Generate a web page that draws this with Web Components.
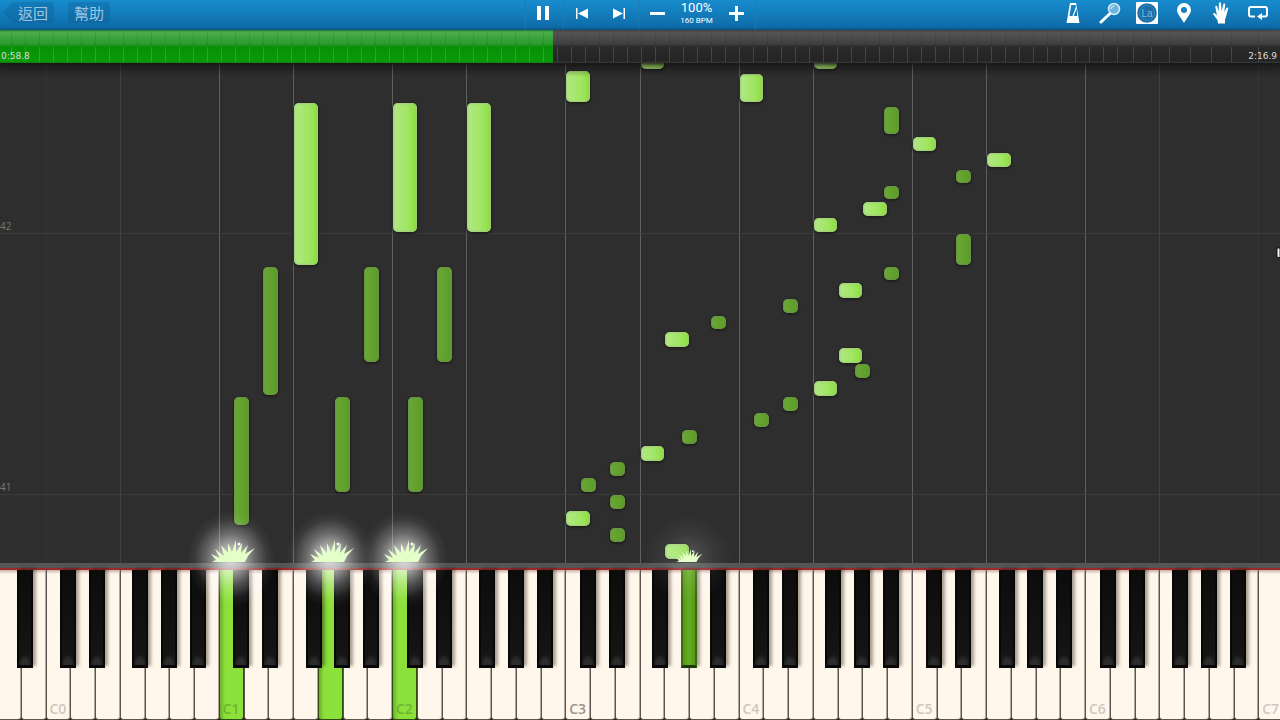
<!DOCTYPE html>
<html lang="zh-Hant">
<head>
<meta charset="utf-8">
<meta name="viewport" content="width=device-width, initial-scale=1">
<title>Piano Roll</title>
<style>
    body {
        margin: 0;
        background: #2e2e2e;
        font-family: "Open Sans", "Noto Sans CJK TC", sans-serif;
    }
</style>
</head>
<body>
<piano-app></piano-app>

<script>
const WHITE_COUNT = 52;
const WHITE_STEPS = { C: 0, D: 1, E: 2, F: 3, G: 4, A: 5, B: 6 };
const BLACK_STEPS = { 'C#': 1, 'D#': 3, 'F#': 6, 'G#': 8, 'A#': 10 };

// The board starts at A-1, so C0 is the third white key
function parseNote(note) {
    const [, name, octave] = note.match(/^([A-G]#?)(-?\d)$/);
    const black = name.length === 2;
    const octaveStart = 2 + Number(octave) * 7;
    const column = black
        ? octaveStart + (BLACK_STEPS[name] + 0.5) * 7 / 12
        : octaveStart + WHITE_STEPS[name];
    return { black, left: column / WHITE_COUNT * 100 };
}

class ToolButton extends HTMLElement {
    constructor() {
        super();
        this.attachShadow({ mode: 'open' });
        this.shadowRoot.innerHTML = `
            <style>
                :host { display: block; width: 37px; height: 30px; }
                button {
                    display: flex;
                    align-items: center;
                    justify-content: center;
                    width: 100%;
                    height: 26px;
                    padding: 0;
                    border: 0;
                    background: none;
                    color: #fff;
                    cursor: pointer;
                }
            </style>
            <button type="button" aria-label="${this.getAttribute('label')}"><slot></slot></button>
        `;
    }
}
customElements.define('tool-button', ToolButton);

class PianoToolbar extends HTMLElement {
    constructor() {
        super();
        this.attachShadow({ mode: 'open' });
        this.shadowRoot.innerHTML = `
            <style>
                :host {
                    display: grid;
                    grid-template-columns: 1fr auto 1fr;
                    height: 30px;
                    background: linear-gradient(#178ccd, #0e69a6);
                    color: #fff;
                }
                svg { display: block; fill: currentColor; }
                .menu { display: flex; gap: 14px; padding: 2px 0 0 3px; }
                .menu button {
                    height: 21px;
                    padding: 0 6px;
                    border: 0;
                    border-radius: 3px;
                    background: rgba(10, 80, 130, .25);
                    color: #9cc6e0;
                    font: 15px/19px "Noto Sans CJK TC", sans-serif;
                }
                .menu .back {
                    padding-left: 15px;
                    clip-path: polygon(0 50%, 10px 0, 100% 0, 100% 100%, 10px 100%);
                }
                .transport { display: flex; }
                .group {
                    display: flex;
                    box-sizing: border-box;
                    border-left: 1px solid #1c7ab4;
                }
                .group:last-child { border-right: 1px solid #1c7ab4; }
                .tempo {
                    display: flex;
                    flex-direction: column;
                    width: 42px;
                    text-align: center;
                    font-family: Roboto, sans-serif;
                }
                .tempo .speed { font-size: 13px; line-height: 16px; }
                .tempo .bpm { font-size: 8px; line-height: 10px; }
                .tools { display: flex; justify-content: flex-end; padding-right: 4px; }
            </style>
            <nav class="menu">
                <button class="back" type="button">返回</button>
                <button type="button">幫助</button>
            </nav>
            <div class="transport">
                <div class="group">
                    <tool-button label="Pause">
                        <svg width="14" height="14"><path d="M0 0h4v14H0zM8 0h4v14H8z"/></svg>
                    </tool-button>
                </div>
                <div class="group">
                    <tool-button label="Previous">
                        <svg width="13" height="11"><path d="M0 0h1.500v11H0zM12 .5v10L2 5.500z"/></svg>
                    </tool-button>
                    <tool-button label="Next">
                        <svg width="13" height="11"><path d="M10.500 0H12v11h-1.500zM0 .5v10l10-5z"/></svg>
                    </tool-button>
                </div>
                <div class="group">
                    <tool-button label="Slower">
                        <svg width="15" height="15"><path d="M0 6h15v3H0z"/></svg>
                    </tool-button>
                    <div class="tempo">
                        <span class="speed">100%</span>
                        <span class="bpm">160 BPM</span>
                    </div>
                    <tool-button label="Faster">
                        <svg width="15" height="15"><path d="M0 6h6V0h3v6h6v3H9v6H6V9H0z"/></svg>
                    </tool-button>
                </div>
            </div>
            <div class="tools">
                <tool-button label="Metronome">
                    <svg width="16" height="22" viewBox="0 0 16 22">
                        <path fill-rule="evenodd" d="M5 1h6l3.500 20h-13zM6.200 3L4.500 14h3L11 4.500 10.500 3zM11.500 6.500L8.800 14h3.500z"/>
                    </svg>
                </tool-button>
                <tool-button label="Zoom">
                    <svg width="22" height="22" viewBox="0 0 22 22">
                        <circle cx="15" cy="7" r="5.500" fill="#6ab4e0" stroke="#d5eaf7" stroke-width="1.500"/>
                        <path d="M2 20L10.500 12" stroke="#fff" stroke-width="3" stroke-linecap="round"/>
                        <path d="M12 7a3.500 3.500 0 0 1 3.500-3" fill="none" stroke="#b9dcf1" stroke-width="1.500"/>
                    </svg>
                </tool-button>
                <tool-button label="Note names">
                    <svg width="22" height="22" viewBox="0 0 22 22">
                        <rect width="22" height="22" rx="1"/>
                        <circle cx="11" cy="11" r="9.800" fill="#1a6da6"/>
                        <circle cx="11" cy="11" r="7.500" fill="none" stroke="#2f85bd"/>
                        <text x="11" y="15" text-anchor="middle" font-size="10" fill="#7fb9dd">La</text>
                    </svg>
                </tool-button>
                <tool-button label="Marker">
                    <svg width="14" height="20" viewBox="0 0 14 20">
                        <path fill-rule="evenodd" d="M7 0a7 7 0 0 1 7 7c0 4-4.500 8-7 13C4.500 15 0 11 0 7a7 7 0 0 1 7-7zm0 4a3 3 0 1 0 0 6 3 3 0 0 0 0-6z"/>
                    </svg>
                </tool-button>
                <tool-button label="Hands">
                    <svg width="16" height="22" viewBox="0 0 16 22">
                        <path d="M5 21.500L4.500 18 .3 12.500C-.2 11.300 1.200 10.600 2 11.400l2 2L2.300 5c-.2-1.500 1.600-1.700 1.900-.4L5.800 9.500 5.900 1.500c0-1.600 2-1.600 2.100 0L8.600 9.300 10.200 2.500c.3-1.500 2.200-1.100 2 .4L11.300 10l2-3.800c.6-1.200 2.200-.6 1.800.7L13.200 14l-1.200 4v3.500z"/>
                    </svg>
                </tool-button>
                <tool-button label="Loop">
                    <svg width="20" height="14" viewBox="0 0 20 14">
                        <path d="M7 10.500H3a2 2 0 0 1-2-2V3a2 2 0 0 1 2-2h14a2 2 0 0 1 2 2v5.500a2 2 0 0 1-2 2h-4" fill="none" stroke="currentColor" stroke-width="2"/>
                        <path d="M9 10.500l5-3.500v7z"/>
                    </svg>
                </tool-button>
            </div>
        `;
    }
}
customElements.define('piano-toolbar', PianoToolbar);

class SeekBar extends HTMLElement {
    constructor() {
        super();
        this.attachShadow({ mode: 'open' });
        this.shadowRoot.innerHTML = `
            <style>
                :host {
                    display: grid;
                    height: 33px;
                    box-shadow: 0 1px 4px #181818;
                    position: relative;
                    z-index: 1;
                }
                :host > * { grid-area: 1 / 1; }
                progress {
                    appearance: none;
                    width: 100%;
                    height: 33px;
                    border: 0;
                }
                progress::-webkit-progress-bar {
                    background: linear-gradient(#3d3d3d, #555 2px, #404040 14px, #2a2a2a 17px, #242424 31px, #3a3a3a);
                }
                progress::-webkit-progress-value {
                    background: linear-gradient(#1a7a3a, #4bac4b 2px, #2a9a2a 14px, #079007 17px, #0a9a0a 31px, #137a13);
                }
                svg { width: 100%; height: 33px; }
                .times {
                    display: flex;
                    justify-content: space-between;
                    align-items: flex-end;
                    padding: 0 3px 1px 1px;
                    color: #dcdcdc;
                    font: 9px/12px "DejaVu Sans", sans-serif;
                }
            </style>
            <progress max="1000" value="432" aria-label="Song position"></progress>
            <svg>${this.renderTicks()}</svg>
            <div class="times"><span>0:58.8</span><span>2:16.9</span></div>
        `;
    }

    renderTicks() {
        // Measures get longer where the song slows down at the end
        const ticks = [];
        for (let x = 11; x < 1120; x += 14) ticks.push(x);
        ticks.push(1133, 1151, 1169, 1190, 1211, 1231, 1258);
        return ticks.map(x => `
            <rect x="${x / 12.8}%" y="1" width="1" height="16" fill="#000" opacity=".08" />
            <rect x="${x / 12.8}%" y="17" width="1" height="15" fill="#fff" opacity=".14" />
        `).join('');
    }
}
customElements.define('seek-bar', SeekBar);

class NoteRoll extends HTMLElement {
    constructor() {
        super();
        this.attachShadow({ mode: 'open' });
        this._notes = [];
        this.render();
    }

    set notes(value) {
        this._notes = value;
        this.render();
    }

    render() {
        this.shadowRoot.innerHTML = `
            <style>
                :host {
                    display: block;
                    position: relative;
                    overflow: hidden;
                    min-height: 300px;
                    background: #2e2e2e;
                }
                :host::after {
                    content: "";
                    position: absolute;
                    inset: 0 0 auto;
                    height: 14px;
                    background: linear-gradient(rgba(0, 0, 0, .4), transparent);
                }
                .board { position: absolute; inset: 0 -3px 0 -4px; }
                .column {
                    position: absolute;
                    top: 0;
                    bottom: 0;
                    width: 1px;
                    background: #606060;
                }
                .measure {
                    position: absolute;
                    left: 0;
                    right: 0;
                    height: 1px;
                    background: #3c3c3c;
                }
                .measure span {
                    position: absolute;
                    left: 4px;
                    bottom: 1px;
                    color: #777;
                    font-size: 10px;
                    line-height: 14px;
                }
                .note {
                    position: absolute;
                    box-sizing: border-box;
                    width: calc(100% / ${WHITE_COUNT} - 1px);
                    margin-left: 1px;
                    border-radius: 5px;
                    background: linear-gradient(90deg, #b2e886, #a0e663 60%, #8cdc3c);
                    box-shadow: inset 0 0 2px 1px #a3c97e, 0 1px 2px 1px #202020;
                }
                .note.black {
                    width: 15px;
                    margin-left: -6px;
                    background: linear-gradient(90deg, #6ba838, #5c9c26);
                    box-shadow: inset 0 0 2px 1px #6b9248, 0 1px 2px 1px #202020;
                }
            </style>
            <div class="board">
                ${this.renderColumns()}
                ${this.renderMeasure(42, 329)}
                ${this.renderMeasure(41, 68)}
                ${this._notes.map(note => this.renderNote(note)).join('')}
            </div>
        `;
    }

    renderColumns() {
        let columns = '';
        for (let octave = 0; octave < 8; octave++) {
            ['C', 'F'].forEach(name => {
                const { left } = parseNote(name + octave);
                if (left > 99) return;
                // Lines fade out towards both ends of the board
                const edge = Math.min(left, 100 - left);
                const opacity = edge < 5 ? 0.15 : edge < 12 ? 0.4 : 1;
                columns += `<div class="column" style="left:${left}%;opacity:${opacity}"></div>`;
            });
        }
        return columns;
    }

    renderMeasure(number, bottom) {
        return `<div class="measure" style="bottom:${bottom}px"><span>${number}</span></div>`;
    }

    renderNote([note, bottom, height]) {
        const { black, left } = parseNote(note);
        return `<div class="note${black ? ' black' : ''}" style="left:${left}%;bottom:${bottom}px;height:${height}px"></div>`;
    }
}
customElements.define('note-roll', NoteRoll);

class KeyFlare extends HTMLElement {
    constructor() {
        super();
        this.attachShadow({ mode: 'open' });
        this.shadowRoot.innerHTML = `
            <style>
                :host {
                    display: block;
                    width: 120px;
                    height: 120px;
                    pointer-events: none;
                    background: radial-gradient(ellipse 44px 48px at 50% 50%, rgba(255, 255, 255, .8), rgba(255, 255, 255, .62) 25%, rgba(255, 255, 255, .28) 55%, rgba(255, 255, 255, .06) 82%, transparent);
                }
                :host([small]) {
                    background: radial-gradient(circle 44px at 50% 50%, rgba(255, 255, 255, .2), rgba(255, 255, 255, .05) 60%, transparent);
                }
                svg { display: block; width: 120px; height: 63px; }
                :host([small]) svg { transform: scale(.6); transform-origin: 60px 63px; }
            </style>
            <svg viewBox="0 0 120 63">
                <path fill="#e4ffc8" d="M41 63l4-2-5-6 9 4-5-9 9 7-3-11 7 8 0-10 4 9 4-12 0 12 6-9-1 10 7-8-3 9 10-6-7 8-3 6z"/>
                <circle cx="68" cy="45" r="1.500" fill="#fff"/>
            </svg>
        `;
    }
}
customElements.define('key-flare', KeyFlare);

class PianoKeyboard extends HTMLElement {
    constructor() {
        super();
        this.attachShadow({ mode: 'open' });
        this._pressed = [];
        this.render();
    }

    set pressed(value) {
        this._pressed = value;
        this.render();
    }

    render() {
        this.shadowRoot.innerHTML = `
            <style>
                :host {
                    display: block;
                    position: relative;
                    z-index: 2;
                    height: 157px;
                    border-top: 5px solid #555;
                    box-sizing: border-box;
                }
                .board {
                    position: relative;
                    display: flex;
                    height: 150px;
                    margin: 0 -3px 0 -4px;
                    border-top: 2px solid #9a2a2c;
                    background: #1c1815;
                }
                button {
                    box-sizing: border-box;
                    padding: 0;
                    border: 0;
                }
                .white {
                    flex: 1 1 0;
                    min-width: 0;
                    display: flex;
                    align-items: flex-end;
                    border-left: 1px solid #5d554d;
                    border-right: 1px solid #b0a79b;
                    border-bottom: 1px solid #5d554d;
                    border-radius: 0 0 3px 3px;
                    background: linear-gradient(#c9b0a6, #fff7ec 4px);
                    color: #cfc7bd;
                    font: 600 14px/20px "Open Sans", sans-serif;
                }
                .white span { padding-left: 3px; }
                .white.middle { color: #9b958e; }
                .white.pressed {
                    border-color: #2f4c13;
                    background: linear-gradient(90deg, #6aae2c, #8be03a 5px);
                    color: #6fb431;
                }
                .black {
                    position: absolute;
                    top: 0;
                    width: 16px;
                    height: 98px;
                    margin-left: -7px;
                    border: solid #080808;
                    border-width: 0 2px 3px;
                    background:
                        radial-gradient(ellipse 7px 11px at 50% 100%, #2c2c2c 50%, transparent),
                        linear-gradient(#0c0c0c, #151515);
                    box-shadow: 3px -2px 3px rgba(40, 25, 10, .4);
                }
                .black.pressed {
                    border-color: #3b6a12;
                    border-bottom-color: #1c3606;
                    background: linear-gradient(90deg, #57961b, #65ac22 50%, #57961b);
                }
                key-flare {
                    position: absolute;
                    top: -71px;
                    margin-left: -60px;
                }
            </style>
            <div class="board">
                ${this.renderKeys()}
                ${this.renderFlares()}
            </div>
        `;
    }

    renderKeys() {
        let whites = '';
        let blacks = '';
        for (let octave = -1; octave < 8; octave++) {
            for (const name of ['C', 'C#', 'D', 'D#', 'E', 'F', 'F#', 'G', 'G#', 'A', 'A#', 'B']) {
                const note = name + octave;
                const { black, left } = parseNote(note);
                if (left < 0 || left > 99) continue;
                const pressed = this._pressed.includes(note) ? ' pressed' : '';
                if (black) {
                    blacks += `<button type="button" class="black${pressed}" aria-label="${note}" style="left:${left}%"></button>`;
                } else {
                    const label = name === 'C' ? `<span>${note}</span>` : '';
                    const middle = note === 'C3' ? ' middle' : '';
                    whites += `<button type="button" class="white${pressed}${middle}" aria-label="${note}">${label}</button>`;
                }
            }
        }
        return whites + blacks;
    }

    renderFlares() {
        return this._pressed.map(note => {
            const { black, left } = parseNote(note);
            const center = black ? left : left + 50 / WHITE_COUNT;
            return `<key-flare ${black ? 'small' : ''} style="left:${center}%"></key-flare>`;
        }).join('');
    }
}
customElements.define('piano-keyboard', PianoKeyboard);

class PianoApp extends HTMLElement {
    constructor() {
        super();
        this.attachShadow({ mode: 'open' });
        this.shadowRoot.innerHTML = `
            <style>
                :host {
                    display: flex;
                    flex-direction: column;
                    min-height: 100vh;
                    position: relative;
                    overflow: clip;
                }
                note-roll { flex: 1; }
                .pointer { position: absolute; right: 0; top: 247px; }
            </style>
            <piano-toolbar></piano-toolbar>
            <seek-bar></seek-bar>
            <note-roll></note-roll>
            <piano-keyboard></piano-keyboard>
            <svg class="pointer" width="4" height="12"><path d="M1 1h3v10L1 10z" fill="#fff" stroke="#111"/></svg>
        `;
    }

    connectedCallback() {
        // [note, distance above the keyboard, length]
        this.shadowRoot.querySelector('note-roll').notes = [
            ['F1', 298, 162], ['C2', 331, 129], ['F2', 331, 129],
            ['D#1', 168, 128], ['A#1', 201, 95], ['D#2', 201, 95],
            ['C#1', 38, 128], ['G#1', 71, 95], ['C#2', 71, 95],
            ['C3', 461, 31], ['C4', 461, 28], ['F3', 494, 14], ['F4', 494, 14],
            ['A#4', 429, 27], ['C5', 412, 14], ['F5', 396, 14], ['D#5', 380, 13],
            ['A#4', 364, 13], ['A4', 347, 14], ['F4', 331, 14], ['D#5', 298, 31],
            ['A#4', 283, 13], ['G4', 265, 15], ['D#4', 250, 14], ['A#3', 234, 13],
            ['G3', 216, 15], ['G4', 200, 15], ['G#4', 185, 14], ['F4', 167, 15],
            ['D#4', 152, 14], ['C#4', 136, 14], ['G#3', 119, 14], ['F3', 102, 15],
            ['D#3', 87, 14], ['C#3', 71, 14], ['D#3', 54, 14], ['C3', 37, 15],
            ['D#3', 21, 14], ['G3', 4, 15]
        ];
        this.shadowRoot.querySelector('piano-keyboard').pressed = ['C1', 'G1', 'C2', 'G#3'];
    }
}
customElements.define('piano-app', PianoApp);
</script>
</body>
</html>
